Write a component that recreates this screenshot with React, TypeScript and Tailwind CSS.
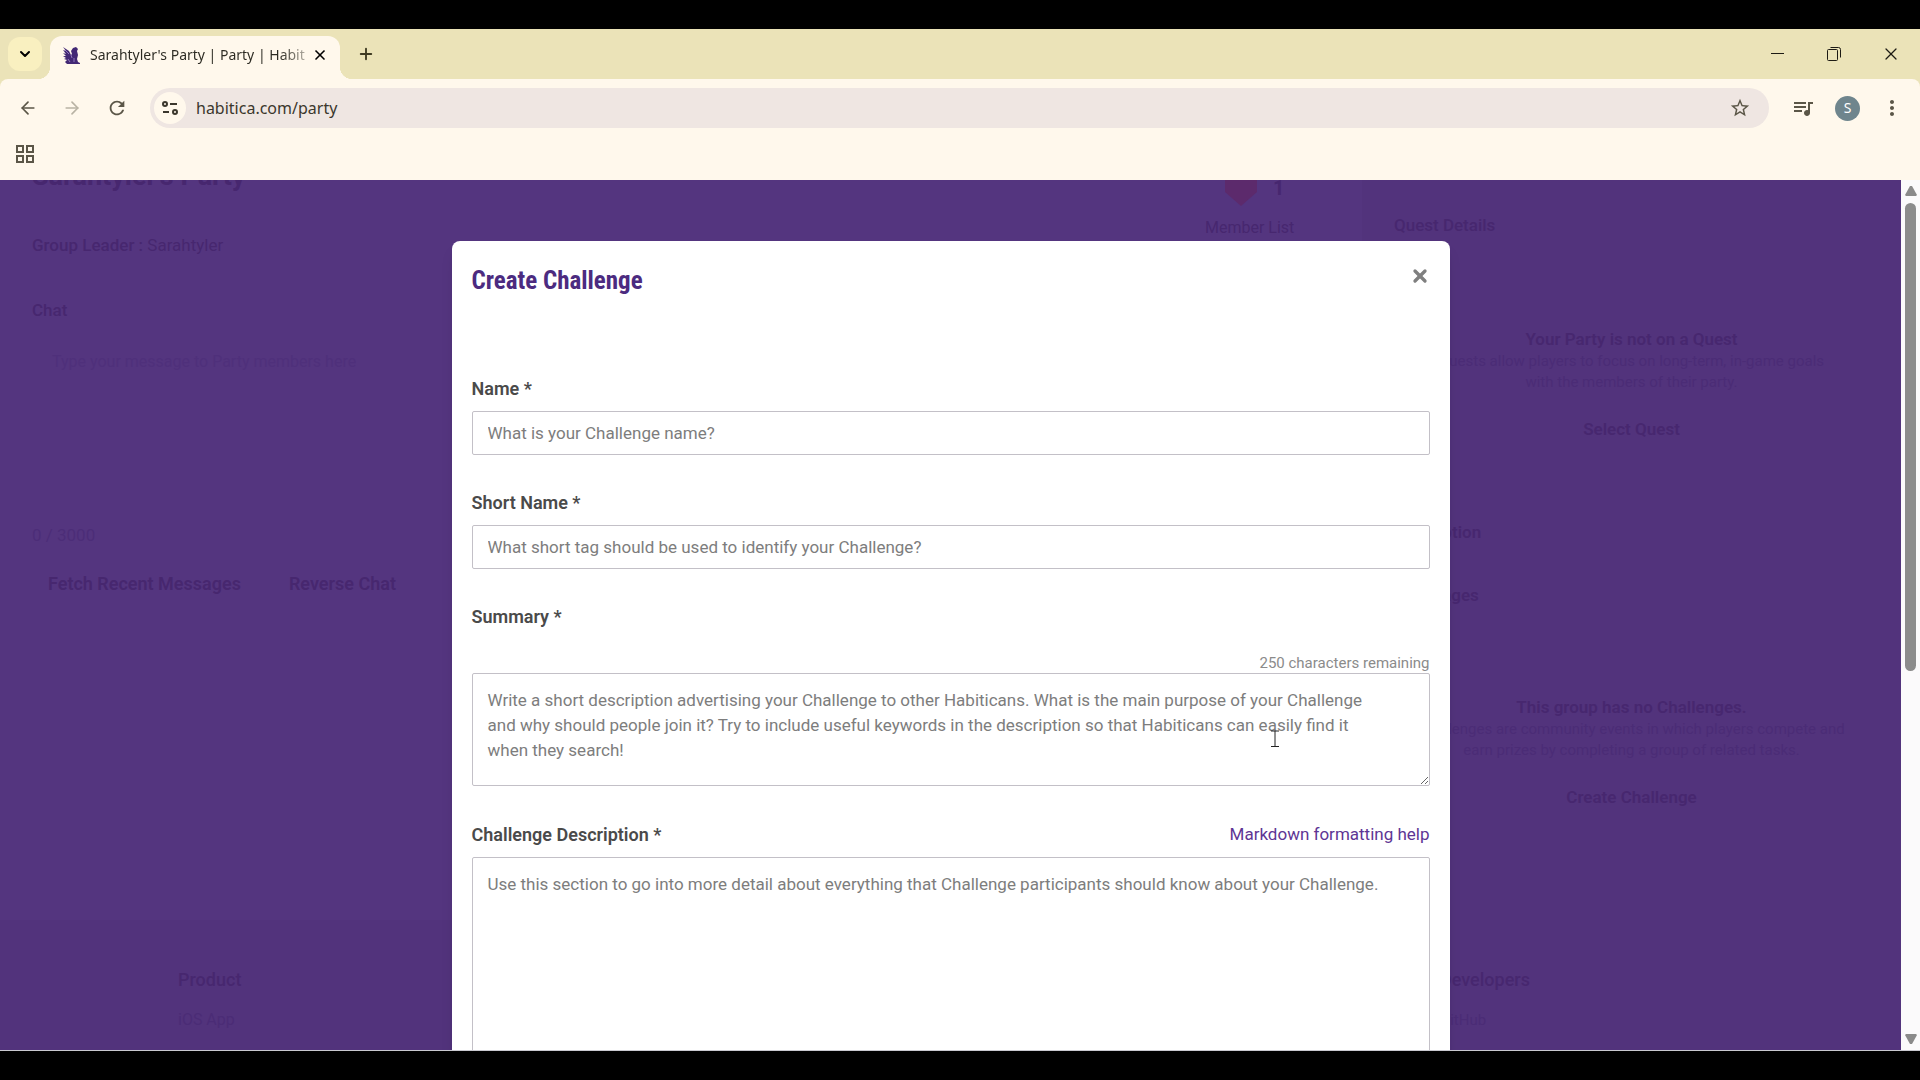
import { ChevronDown, Plus, X, ArrowLeft, ArrowRight } from "lucide-react";
import { MdRefresh, MdStarBorder, MdQueueMusic, MdMoreVert } from "react-icons/md";

function Gryphon() {
  return (
    <svg viewBox="0 0 18 18" className="size-[18px] shrink-0" fill="#432874">
      <path d="M1 1l6 4 2 4 1-1-1-3 2-3 3-1 2 2-1 2 1 4-1 4 1 3 2 1v1H5l-2-2 2-2-3-1 2-1-3-2 3 0-3-3 3 1-3-4 3 1z" />
      <path d="M6 13l2 3M9 9l1 3M12 12v4M3 4l4 4" stroke="#a48bd0" strokeWidth="0.8" fill="none" />
    </svg>
  );
}

function SiteInfoIcon() {
  return (
    <svg viewBox="0 0 18 18" className="size-[18px]" fill="none" stroke="#3b372d" strokeWidth="2">
      <circle cx="4" cy="5" r="2" />
      <path d="M9 5h7M2 13h6" />
      <circle cx="14" cy="13" r="2" />
    </svg>
  );
}

function AppsIcon() {
  return (
    <svg viewBox="0 0 18 18" className="size-[18px]" fill="none" stroke="#5b5647" strokeWidth="2">
      <path d="M1 1h6v6H1zM11 1h6v6h-6zM1 11h6v6H1zM11 11h6v6h-6z" />
    </svg>
  );
}

function MinimizeIcon() {
  return (
    <svg viewBox="0 0 14 14" className="size-3.5" fill="none" stroke="#1d1b14">
      <path d="M0 6.5h13" />
    </svg>
  );
}

function RestoreIcon() {
  return (
    <svg viewBox="0 0 14 14" className="size-3.5" fill="none" stroke="#1d1b14">
      <rect x="0.5" y="2.5" width="10" height="11" rx="1" />
      <path d="M3.5 0.5h8a2 2 0 0 1 2 2v8" />
    </svg>
  );
}

function TabStrip() {
  return (
    <div className="flex h-[50px] shrink-0 items-end bg-[#ebe3b8]">
      <div className="flex h-full w-[50px] items-center pl-2">
        <button aria-label="Search tabs" className="flex size-[34px] items-center justify-center rounded-xl bg-[#f9f0c0]">
          <ChevronDown className="size-4" strokeWidth={3} />
        </button>
      </div>
      <div className="relative flex h-[43px] w-[290px] items-center rounded-t-xl bg-[#fff8ec] px-3 pb-1.5">
        <span className="absolute bottom-0 -left-3 size-3 bg-radial-[at_0%_0%] from-transparent from-70% to-[#fff8ec] to-72%" />
        <span className="absolute bottom-0 -right-3 size-3 bg-radial-[at_100%_0%] from-transparent from-70% to-[#fff8ec] to-72%" />
        <Gryphon />
        <span className="ml-2.5 flex-1 whitespace-nowrap bg-linear-to-r from-[#2c2a22] from-85% to-[#d8d2c6] bg-clip-text text-sm text-transparent">
          Sarahtyler's Party | Party | Habit
        </span>
        <button aria-label="Close tab">
          <X className="size-4" strokeWidth={2.5} />
        </button>
      </div>
      <button aria-label="New tab" className="flex h-full w-[52px] items-center justify-center text-[#3f3b22]">
        <Plus className="size-[18px]" strokeWidth={2.5} />
      </button>
      <div className="ml-auto flex h-full items-center text-[#1d1b14]">
        <button aria-label="Minimize" className="flex w-14 justify-center">
          <MinimizeIcon />
        </button>
        <button aria-label="Restore" className="flex w-14 justify-center">
          <RestoreIcon />
        </button>
        <button aria-label="Close window" className="flex w-[58px] justify-center">
          <X className="size-5" strokeWidth={1.5} />
        </button>
      </div>
    </div>
  );
}

function Toolbar() {
  return (
    <div className="shrink-0 bg-[#ebe3b8]">
      <div className="flex h-[58px] items-center rounded-t-lg bg-[#fff8ec] text-[#5b5647]">
        <button aria-label="Back" className="ml-[18px]">
          <ArrowLeft className="size-5" />
        </button>
        <button aria-label="Forward" className="ml-6 text-[#b9b3a4]">
          <ArrowRight className="size-5" />
        </button>
        <button aria-label="Reload" className="ml-6">
          <MdRefresh className="size-[22px]" />
        </button>
        <div className="ml-[22px] flex h-10 flex-1 items-center rounded-full bg-[#efe6e2] pr-[18px] pl-1">
          <span className="flex size-8 items-center justify-center rounded-full bg-[#fff8ec]">
            <SiteInfoIcon />
          </span>
          <input
            aria-label="Address"
            defaultValue="habitica.com/party"
            className="ml-2.5 flex-1 bg-transparent text-base text-[#3b372d] outline-none"
          />
          <button aria-label="Bookmark">
            <MdStarBorder className="size-[22px]" />
          </button>
        </div>
        <button aria-label="Media controls" className="ml-[22px]">
          <MdQueueMusic className="size-6" />
        </button>
        <button aria-label="Profile" className="ml-5 size-[25px] rounded-full bg-[#6f858d] text-sm text-white">
          S
        </button>
        <button aria-label="Menu" className="ml-5 mr-4">
          <MdMoreVert className="size-6" />
        </button>
      </div>
    </div>
  );
}

function PartyPage() {
  return (
    <div className="flex h-full flex-col text-[#47276f]">
      <div className="flex h-[740px] shrink-0">
        <div className="flex flex-1 justify-between pl-8">
          <div>
            <h1 className="-mt-5 text-[27px] leading-8 font-bold">Sarahtyler's Party</h1>
            <p className="mt-[41px] text-[17px] leading-6 font-medium">
              Group Leader : <span className="font-normal">Sarahtyler</span>
            </p>
            <h2 className="mt-[41px] text-[17px] leading-6 font-medium">Chat</h2>
            <p className="mt-7 pl-5 text-base leading-6 text-[#4f307b]">Type your message to Party members here</p>
            <p className="mt-[149px] text-[17px] leading-6 text-[#4c2d78]">0 / 3000</p>
            <div className="mt-[25px] flex gap-12 pl-4 text-[18px] leading-6 font-semibold">
              <button>Fetch Recent Messages</button>
              <button>Reverse Chat</button>
            </div>
          </div>
          <div className="w-[157px]">
            <div className="flex h-9 gap-4 pl-5 text-xl leading-4 font-bold">
              <svg viewBox="0 0 32 26" className="h-[26px] w-8" fill="#5c2a6c">
                <path d="M0 0h32v12L16 26 0 12z" />
              </svg>
              1
            </div>
            <p className="text-base leading-6">Member List</p>
          </div>
        </div>
        <div className="w-[539px] bg-[#52337c] px-8 text-center">
          <h3 className="mt-[33px] text-left text-[17px] leading-6 font-medium">Quest Details</h3>
          <p className="mt-[90px] text-[17px] leading-6 font-semibold">Your Party is not on a Quest</p>
          <p className="px-8 text-[15px] leading-[21px] text-[#4b2c76]">
            Quests allow players to focus on long-term, in-game goals with the members of their party.
          </p>
          <button className="mt-6 text-[17px] leading-6 font-semibold">Select Quest</button>
          <h3 className="mt-[78px] text-left text-[17px] leading-6 font-semibold">Description</h3>
          <h3 className="mt-[39px] text-left text-[17px] leading-6 font-semibold">Challenges</h3>
          <p className="mt-[88px] text-[17px] leading-6 font-semibold">This group has no Challenges.</p>
          <p className="px-6 text-[15px] leading-[21px] text-[#4b2c76]">
            Challenges are community events in which players compete and earn prizes by completing a group of related
            tasks.
          </p>
          <button className="mt-6 text-[17px] leading-6 font-semibold">Create Challenge</button>
        </div>
      </div>
      <footer className="flex flex-1 bg-[#52337c] pt-12 pl-[178px] text-[18px] leading-6">
        <div className="w-[1262px]">
          <h3 className="font-medium">Product</h3>
          <a href="#ios" className="mt-4 block text-base leading-6 text-[#4b2c76]">iOS App</a>
        </div>
        <div>
          <h3 className="font-medium">Developers</h3>
          <a href="#github" className="mt-4 block text-[15px] leading-6 text-[#4b2c76]">GitHub</a>
        </div>
      </footer>
    </div>
  );
}

const inputClass =
  "block w-full rounded-[2px] border border-[#c3c0c7] pl-[15px] text-[17px] text-[#4e4a57] placeholder-[#7d7d7d] outline-none";

function CreateChallengeModal() {
  return (
    <div
      role="dialog"
      aria-labelledby="modal-title"
      className="w-[998px] rounded-t-lg bg-white px-5 pt-[25px] text-[18px] leading-[25px] text-[#4a4a4a] shadow-lg">
      <div className="flex items-start justify-between">
        <h2
          id="modal-title"
          className="font-['Roboto_Condensed',Roboto,sans-serif] text-[25px] leading-[30px] font-bold text-[#4c2b80]">
          Create Challenge
        </h2>
        <button aria-label="Close" className="text-[#7f7f7f]">
          <X className="size-5" strokeWidth={4} />
        </button>
      </div>

      <div className="mt-20">
        <label htmlFor="name" className="font-semibold">Name *</label>
        <input id="name" placeholder="What is your Challenge name?" className={`${inputClass} mt-2.5 h-11 pr-4`} />
      </div>

      <div className="mt-[35px]">
        <label htmlFor="short-name" className="font-semibold">Short Name *</label>
        <input
          id="short-name"
          placeholder="What short tag should be used to identify your Challenge?"
          className={`${inputClass} mt-2.5 h-11 pr-4`}
        />
      </div>

      <div className="mt-[35px]">
        <label htmlFor="summary" className="font-semibold">Summary *</label>
        <div className="mt-6 text-right text-[15px] leading-5 text-[#8b8b8b]">250 characters remaining</div>
        <textarea
          id="summary"
          placeholder="Write a short description advertising your Challenge to other Habiticans. What is the main purpose of your Challenge and why should people join it? Try to include useful keywords in the description so that Habiticans can easily find it when they search!"
          className={`${inputClass} h-[113px] resize-y pt-3.5 pr-10`}
        />
      </div>

      <div className="mt-9">
        <div className="flex justify-between">
          <label htmlFor="description" className="font-semibold">Challenge Description *</label>
          <a href="#markdown" className="text-[17px] text-[#5e3594]">Markdown formatting help</a>
        </div>
        <textarea
          id="description"
          placeholder="Use this section to go into more detail about everything that Challenge participants should know about your Challenge."
          className={`${inputClass} mt-2.5 h-[300px] pt-3.5 pr-4`}
        />
      </div>
    </div>
  );
}

function Scrollbar() {
  return (
    <div className="flex w-[19px] shrink-0 flex-col items-center bg-[#fbfafb] py-1.5 text-[#8a8a8a]">
      <svg viewBox="0 0 12 10" className="h-2.5 w-3 shrink-0" fill="currentColor">
        <path d="M5 0h2l5 9-1 1H1L0 9z" />
      </svg>
      <div className="mt-[7px] h-[468px] w-[11px] rounded-full bg-[#8c8c8c]" />
      <svg viewBox="0 0 12 10" className="mt-auto h-2.5 w-3 shrink-0" fill="currentColor">
        <path d="M5 10h2l5-9-1-1H1L0 1z" />
      </svg>
    </div>
  );
}

function TextCursor() {
  return (
    <svg viewBox="0 0 10 18" className="absolute top-[550px] left-[1270px] h-[18px] w-2.5" fill="none" stroke="#222">
      <path d="M1 1h8M1 16.5h8M5 1v15" />
    </svg>
  );
}

export default function App() {
  return (
    <div className="flex h-screen flex-col overflow-hidden bg-black pt-[29px] pb-[29px] font-['Noto_Sans',sans-serif]">
      <TabStrip />
      <Toolbar />
      <div className="flex h-[43px] shrink-0 items-start bg-[#fff8ec] pt-2 pl-4">
        <button aria-label="Apps">
          <AppsIcon />
        </button>
      </div>
      <div className="flex min-h-0 flex-1 border-b border-[#c9c9d0] font-[Roboto,sans-serif]">
        <main className="relative min-w-0 flex-1 overflow-hidden bg-[#54357f]">
          <PartyPage />
          <div className="absolute inset-0 flex items-start justify-center pt-[61px]">
            <CreateChallengeModal />
          </div>
          <TextCursor />
        </main>
        <Scrollbar />
      </div>
    </div>
  );
}
